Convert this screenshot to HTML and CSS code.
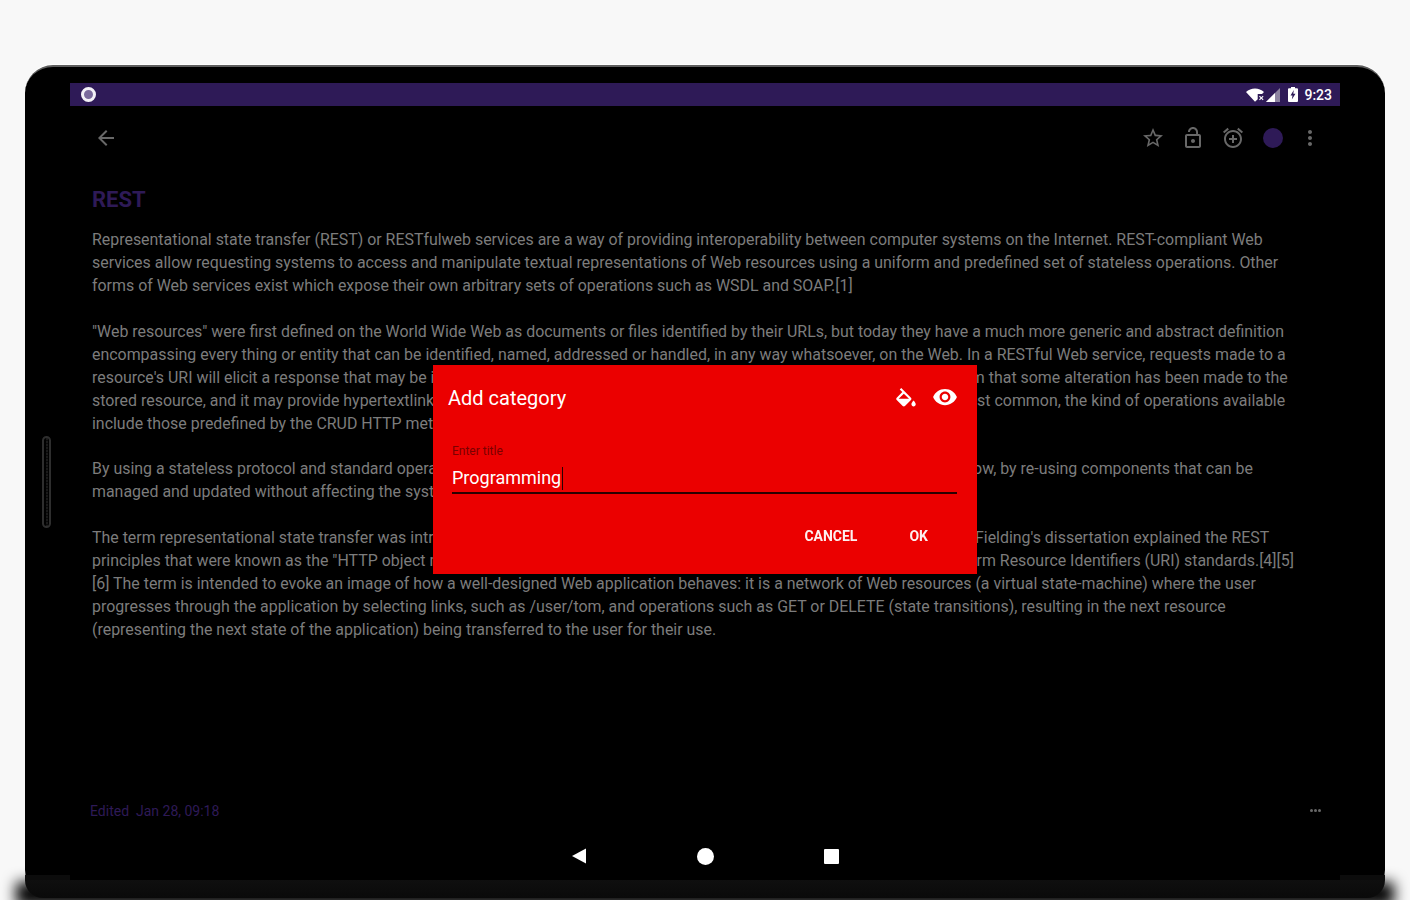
FILE: index.html
```html
<!DOCTYPE html>
<html lang="en">
<head>
<meta charset="utf-8">
<title>Add category</title>
<link rel="stylesheet" href="styles.css">
</head>
<body>
<div class="device">
  <div class="side-handle"></div>
  <div class="screen">
    <div class="status-bar">
      <span class="notif-dot"></span>
      <div class="status-right">
        <svg class="st-wifi" viewBox="0 0 20 15"><path fill="#fff" d="M0 4.200C2.700 1.700 6.200.2 10 .2s7.300 1.500 10 4L17.800 6.500h-4.800v5.700L10 15z"/><path fill="#fff" d="M14.500 9.300l.9-.9 1.600 1.600 1.600-1.600.9.900-1.600 1.600 1.600 1.600-.9.900-1.600-1.600-1.600 1.600-.9-.9 1.600-1.600z"/></svg>
        <svg class="st-signal" viewBox="0 0 14 14"><path fill="#8d84a0" d="M14 0v14H0z"/><path fill="#fff" d="M9 5v9H0z"/></svg>
        <svg class="st-batt" viewBox="0 0 10 15"><path fill="#fff" d="M3 0h4v1.200h2a1 1 0 0 1 1 1V14a1 1 0 0 1-1 1H1a1 1 0 0 1-1-1V2.200a1 1 0 0 1 1-1h2z"/><path fill="#2e1a57" d="M5.800 3L2.500 8.500h2L3.800 12.500 7.500 6.800H5.300z"/></svg>
        <span class="clock">9:23</span>
      </div>
    </div>
    <div class="toolbar">
      <svg class="tb-icon" viewBox="0 0 24 24"><path d="M20 11H7.830l5.590-5.590L12 4l-8 8 8 8 1.410-1.410L7.830 13H20v-2z"/></svg>
      <div class="tb-actions">
        <svg class="tb-icon" viewBox="0 0 24 24"><path d="M22 9.240l-7.190-.62L12 2 9.190 8.630 2 9.240l5.460 4.730L5.820 21 12 17.270 18.180 21l-1.630-7.030L22 9.240zM12 15.400l-3.760 2.270 1-4.280-3.320-2.880 4.380-.38L12 6.100l1.710 4.040 4.380.38-3.320 2.880 1 4.280L12 15.400z"/></svg>
        <svg class="tb-icon" viewBox="0 0 24 24"><path d="M12 17c1.100 0 2-.9 2-2s-.9-2-2-2-2 .9-2 2 .9 2 2 2zm6-9h-1V6c0-2.760-2.240-5-5-5S7 3.240 7 6h1.900c0-1.710 1.390-3.100 3.100-3.100 1.710 0 3.100 1.390 3.100 3.100v2H6c-1.100 0-2 .9-2 2v10c0 1.100.9 2 2 2h12c1.100 0 2-.9 2-2V10c0-1.100-.9-2-2-2zm0 12H6V10h12v10z"/></svg>
        <svg class="tb-icon" viewBox="0 0 24 24"><path d="M7.880 3.390L6.600 1.860 2 5.710l1.290 1.530 4.590-3.850zM22 5.720l-4.600-3.860-1.290 1.530 4.600 3.860L22 5.720zM12 4c-4.970 0-9 4.030-9 9s4.020 9 9 9c4.970 0 9-4.030 9-9s-4.030-9-9-9zm0 16c-3.870 0-7-3.130-7-7s3.130-7 7-7 7 3.130 7 7-3.130 7-7 7zm1-11h-2v3H8v2h3v3h2v-3h3v-2h-3V9z"/></svg>
        <span class="tb-color"><span class="color-dot"></span></span>
        <svg class="tb-icon tb-more" viewBox="0 0 24 24"><path d="M12 8c1.100 0 2-.9 2-2s-.9-2-2-2-2 .9-2 2 .9 2 2 2zm0 2c-1.100 0-2 .9-2 2s.9 2 2 2 2-.9 2-2-.9-2-2-2zm0 6c-1.100 0-2 .9-2 2s.9 2 2 2 2-.9 2-2-.9-2-2-2z"/></svg>
      </div>
    </div>
    <main class="note">
      <h1 class="note-title">REST</h1>
      <div class="para">
        <div>Representational state transfer (REST) or RESTfulweb services are a way of providing interoperability between computer systems on the Internet. REST-compliant Web</div>
        <div>services allow requesting systems to access and manipulate textual representations of Web resources using a uniform and predefined set of stateless operations. Other</div>
        <div>forms of Web services exist which expose their own arbitrary sets of operations such as WSDL and SOAP.[1]</div>
      </div>
      <div class="para">
        <div>"Web resources" were first defined on the World Wide Web as documents or files identified by their URLs, but today they have a much more generic and abstract definition</div>
        <div>encompassing every thing or entity that can be identified, named, addressed or handled, in any way whatsoever, on the Web. In a RESTful Web service, requests made to a</div>
        <div>resource's URI will elicit a response that may be in XML, HTML JSON, or some other defined format. The response may confirm that some alteration has been made to the</div>
        <div>stored resource, and it may provide hypertextlinks to other related resources or collections of resources. Using HTTP, as is most common, the kind of operations available</div>
        <div>include those predefined by the CRUD HTTP methods GET, POST, PUT, DELETE and so on.</div>
      </div>
      <div class="para">
        <div>By using a stateless protocol and standard operations, REST systems aim for fast performance, reliability, and the ability to grow, by re-using components that can be</div>
        <div>managed and updated without affecting the system as a whole, even while it is running.</div>
      </div>
      <div class="para">
        <div>The term representational state transfer was introduced and defined in 2000 by Dr. Roy J Fielding in his doctoral dissertation. Fielding's dissertation explained the REST</div>
        <div>principles that were known as the "HTTP object model" beginning in 1994, and were used in designing the HTTP 1.1 and Uniform Resource Identifiers (URI) standards.[4][5]</div>
        <div>[6] The term is intended to evoke an image of how a well-designed Web application behaves: it is a network of Web resources (a virtual state-machine) where the user</div>
        <div>progresses through the application by selecting links, such as /user/tom, and operations such as GET or DELETE (state transitions), resulting in the next resource</div>
        <div>(representing the next state of the application) being transferred to the user for their use.</div>
      </div>
    </main>
    <footer class="note-foot">
      <span class="edited">Edited&nbsp; Jan 28, 09:18</span>
      <span class="foot-dots"><i></i><i></i><i></i></span>
    </footer>
    <nav class="nav-bar">
      <svg class="nav-back" viewBox="0 0 15 16"><path d="M14.500 0.500v15L0.500 8z"/></svg>
      <span class="nav-home"></span>
      <span class="nav-recent"></span>
    </nav>
  </div>
  <div class="chin"></div>
  <section class="dialog">
    <header class="dialog-head">
      <h2 class="dialog-title">Add category</h2>
      <svg class="dlg-fill" viewBox="0 0 24 24"><path d="M16.560 8.940L7.620 0 6.210 1.410l2.380 2.380-5.150 5.150c-.59.590-.59 1.540 0 2.120l5.500 5.500c.29.290.680.440 1.060.440s.770-.150 1.060-.440l5.500-5.500c.590-.580.590-1.530 0-2.120zM5.210 10L10 5.210 14.790 10H5.210zM19 11.500s-2 2.170-2 3.500c0 1.100.9 2 2 2s2-.9 2-2c0-1.330-2-3.500-2-3.500z"/></svg>
      <svg class="dlg-eye" viewBox="0 0 24 24"><path d="M12 4.500C7 4.500 2.730 7.610 1 12c1.730 4.390 6 7.500 11 7.500s9.270-3.110 11-7.500c-1.730-4.390-6-7.500-11-7.500zM12 17c-2.760 0-5-2.240-5-5s2.240-5 5-5 5 2.240 5 5-2.240 5-5 5zm0-8c-1.660 0-3 1.340-3 3s1.340 3 3 3 3-1.340 3-3-1.340-3-3-3z"/></svg>
    </header>
    <div class="field">
      <div class="field-label">Enter title</div>
      <div class="field-input"><span class="field-value">Programming</span><span class="caret"></span></div>
    </div>
    <div class="dialog-actions">
      <span class="dlg-btn">CANCEL</span>
      <span class="dlg-btn">OK</span>
    </div>
  </section>
</div>
</body>
</html>
```
FILE: styles.css
```css
* { box-sizing: border-box; }
html, body { margin: 0; height: 900px; overflow: hidden; }
body { background: #f8f8f8; font-family: Roboto, "Liberation Sans", sans-serif; padding: 65px 25px 0; }

.device {
  position: relative;
  height: 833px;
  background: #000;
  border-radius: 28px;
  border-top: 2px solid #5e5e5e;
  box-shadow: 0 -1px 0 #fff;
  padding: 16px 45px 0;
  display: flex;
  flex-direction: column;
}
.device::after {
  content: "";
  position: absolute;
  left: -9px;
  right: -9px;
  bottom: -8px;
  height: 24px;
  background: #000;
  filter: blur(7px);
  z-index: -1;
}
.side-handle {
  position: absolute;
  left: 17px;
  top: 369px;
  width: 9px;
  height: 92px;
  border: 2px solid #2e2e2e;
  border-radius: 5px;
  background: repeating-linear-gradient(#2a2a2a 0 1.500px, #0a0a0a 1.500px 3px);
  background-size: 2px 3px;
  background-position: center;
  background-repeat: repeat-y;
}
.screen { flex: 1; display: flex; flex-direction: column; min-height: 0; }

.status-bar {
  height: 23px;
  flex: none;
  background: #2e1a57;
  display: flex;
  align-items: center;
  justify-content: space-between;
  padding: 0 8px 0 11px;
}
.notif-dot {
  width: 15px;
  height: 15px;
  border-radius: 50%;
  background: #7a6a9c;
  border: 3px solid #f3f1f7;
}
.status-right { display: flex; align-items: center; }
.st-wifi { width: 18px; height: 14px; }
.st-signal { width: 14px; height: 14px; margin-left: 2px; }
.st-batt { width: 10px; height: 15px; margin-left: 8px; }
.clock { color: #fff; font-size: 14px; font-weight: 500; margin-left: 6px; }

.toolbar {
  height: 64px;
  flex: none;
  display: flex;
  align-items: center;
  justify-content: space-between;
  padding: 0 18px 0 24px;
}
.tb-icon { width: 24px; height: 24px; fill: #686868; display: block; }
.tb-actions { display: flex; align-items: center; gap: 16px; }
.tb-more { margin-left: -3px; }
.tb-color { width: 24px; height: 24px; display: flex; align-items: center; justify-content: center; }
.color-dot { width: 20px; height: 20px; border-radius: 50%; background: #2e1a57; }

.note { flex: none; padding: 0 0 0 22px; white-space: nowrap; }
.note-title { margin: 15px 0 15px; font-size: 22px; line-height: 29px; font-weight: 700; color: #2e1a57; }
.para { font-size: 15.930px; line-height: 22.940px; color: #7c7c7c; margin-bottom: 22.940px; }

.note-foot {
  flex: 1;
  display: flex;
  align-items: flex-end;
  justify-content: space-between;
  padding: 0 19px 0 20px;
}
.edited { font-size: 14px; line-height: 17px; color: #2e1a57; margin-bottom: 12px; }
.foot-dots { display: flex; gap: 1px; margin-bottom: 20px; }
.foot-dots i { width: 3px; height: 3px; border-radius: 50%; background: #686868; display: block; }

.nav-bar {
  height: 48px;
  flex: none;
  display: flex;
  align-items: center;
  justify-content: center;
  gap: 110px;
  padding-right: 1px;
}
.nav-back { width: 16px; height: 16px; fill: #fff; }
.nav-home { width: 17px; height: 17px; border-radius: 50%; background: #fff; }
.nav-recent { width: 15px; height: 15px; border-radius: 1px; background: #fff; }

.chin {
  position: relative;
  height: 18px;
  flex: none;
  margin: 0 -45px;
  background: linear-gradient(#0f0f0f, #0a0a0a);
  border-radius: 0 0 28px 28px;
}
.chin::before, .chin::after {
  content: "";
  position: absolute;
  top: -5px;
  width: 45px;
  height: 5px;
  background: #0c0c0c;
}
.chin::before { left: 0; }
.chin::after { right: 0; }

.dialog {
  position: absolute;
  left: 408px;
  top: 298px;
  width: 544px;
  height: 209px;
  background: #eb0000;
  display: flex;
  flex-direction: column;
  padding: 0 20px 0 15px;
}
.dialog-head { height: 66px; flex: none; display: flex; align-items: center; }
.dialog-title { margin: 0; flex: 1; color: #fff; font-size: 20px; font-weight: 400; line-height: 66px; }
.dlg-fill { width: 26px; height: 26px; fill: #fff; margin-right: 13px; margin-top: 5px; }
.dlg-eye { width: 26px; height: 26px; fill: #fff; margin-right: -1px; margin-top: -2px; }
.field { margin-left: 4px; padding-top: 13px; }
.field-label { font-size: 12px; line-height: 14px; color: #7a0000; }
.field-input { display: flex; align-items: center; height: 36px; border-bottom: 2px solid #2a0000; padding-top: 6px; }
.field-value { color: #fff; font-size: 18px; line-height: 24px; }
.caret { width: 1px; height: 23px; background: #2a0000; margin-left: 1px; }
.dialog-actions { display: flex; justify-content: flex-end; gap: 52px; padding: 34px 29px 0 0; }
.dlg-btn { color: #fff; font-size: 14px; line-height: 16px; font-weight: 700; opacity: .94; }
```
